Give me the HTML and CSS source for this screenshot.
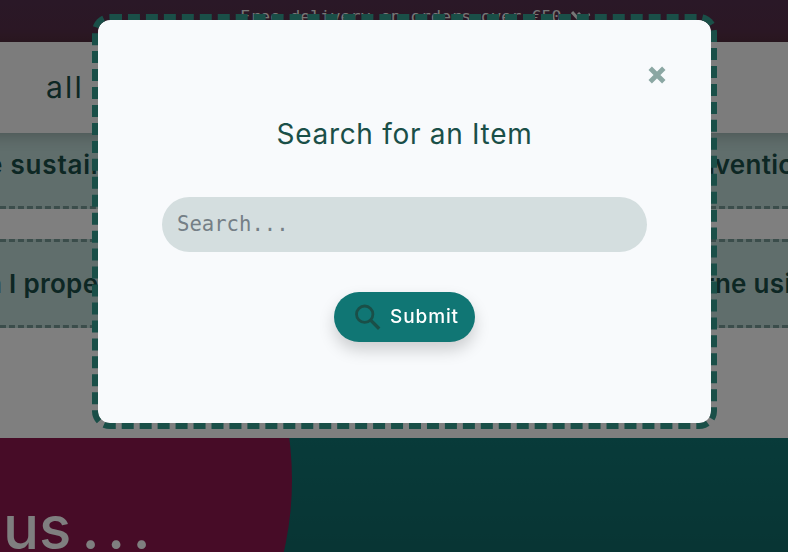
FILE: index.html
```html
<!DOCTYPE html>
<html lang="en">
<head>
<meta charset="utf-8">
<title>Search for an Item</title>
<link rel="stylesheet" href="styles.css">
</head>
<body>
<div class="page">
  <header class="banner">
    <span>Free delivery on orders over €50</span>
    <svg class="truck" width="20" height="14" viewBox="0 0 20 14"><path d="M1 1L11 12M7 2l4 4M17 3l1 2" fill="none" stroke="#eee" stroke-width="3"/></svg>
  </header>
  <nav class="nav"><a>all</a></nav>
  <main class="questions">
    <div class="bar bar-first"><span class="first-left">e sustain</span><span class="first-right">nventic</span></div>
    <div class="bar bar-second"><span class="second-left">n I prope</span><span class="second-right">rne usi</span></div>
  </main>
  <footer class="contact">
    <div class="disc"></div>
    <h2>us<span class="dots">...</span></h2>
  </footer>
</div>
<div class="overlay">
  <section class="modal">
    <button class="close" aria-label="Close"><svg width="18" height="18" viewBox="0 0 18 18"><path d="M2.2 2.2L15.8 15.8M15.8 2.2L2.2 15.8" stroke="#8ba7a3" stroke-width="4.8"/></svg></button>
    <h1>Search for an Item</h1>
    <input class="field" type="text" placeholder="Search...">
    <button class="submit"><svg width="26" height="26" viewBox="0 0 26 26"><circle cx="9.7" cy="10.2" r="8.2" fill="none" stroke="#1a4f48" stroke-width="2.8"/><path d="M15.6 16.1L24.2 24.7" stroke="#1a4f48" stroke-width="3.4"/></svg><span>Submit</span></button>
  </section>
</div>
</body>
</html>
```
FILE: styles.css
```css
* { box-sizing: border-box; }
body { margin: 0; overflow: hidden; font-family: Inter, "Liberation Sans", sans-serif; color: #1a4f48; }
.page { width: 788px; height: 552px; overflow: hidden; background: #fff; }
.banner { height: 42px; padding: 5px 0 0 240px; display: flex; align-items: flex-start; background: linear-gradient(#55304f, #562f49 75%, #573042); color: #eee; font: 16.7px/22px "DejaVu Sans Mono", monospace; white-space: pre; }
.truck { margin: 6px 0 0 9px; }
.nav { position: relative; z-index: 1; height: 91px; margin: 0 -30px; padding: 25px 0 0 76px; background: #f9f9f9; box-shadow: 0 3px 14px rgba(0, 0, 0, .22); font-size: 30px; line-height: 40px; letter-spacing: 2.2px; }
.questions { height: 305px; }
.bar { display: flex; justify-content: space-between; background: #c0dcd8; border: 0 dashed #779a96; font-size: 26px; font-weight: 600; line-height: 32px; letter-spacing: .3px; white-space: nowrap; }
.bar-first { height: 76px; padding-top: 16px; border-bottom-width: 3px; margin-bottom: 30px; }
.bar-second { height: 89px; padding-top: 26px; border-width: 3px 0; }
.first-left { margin-left: -13px; letter-spacing: .8px; }
.first-right { width: 89px; }
.second-left { margin-left: -14px; }
.second-right { width: 84px; }
.contact { position: relative; height: 114px; overflow: hidden; background: linear-gradient(#107674, #106a68); }
.disc { position: absolute; left: -348px; top: -278px; width: 640px; height: 640px; border-radius: 50%; background: #8e184e; }
h2 { position: relative; margin: 0; padding: 51px 0 0 3px; color: #fff; font-size: 60px; font-weight: 500; line-height: 76px; }
.dots { margin-left: 10px; letter-spacing: 7.3px; }
.overlay { position: fixed; inset: 0; z-index: 5; padding: 20px 0 0 98px; background: rgba(0, 0, 0, .5); }
.modal { width: 613px; height: 403px; border-radius: 12px; outline: 6px dashed #1a4f48; background: #f8fafc; display: flex; flex-direction: column; align-items: center; }
button { border: 0; padding: 0; }
.close { align-self: flex-end; margin: 46px 45px 0 0; width: 18px; height: 18px; background: none; }
.close svg { display: block; }
h1 { margin: 30px 0 0; height: 40px; font-size: 28px; font-weight: 400; line-height: 40px; letter-spacing: .7px; white-space: nowrap; }
.field { width: 485px; height: 55px; margin: 43px 0 0; padding: 0 15px 2px; border: 0; border-radius: 28px; background: #d4dedf; font: 20.6px "DejaVu Sans Mono", monospace; }
.field::placeholder { color: #757f86; opacity: 1; }
.submit { display: flex; align-items: center; width: 141px; height: 50px; margin-top: 40px; padding-left: 21px; gap: 9px; border-radius: 25px; background: #107674; box-shadow: 0 8px 16px rgba(0, 0, 0, .18); color: #fff; font: 500 19px/24px Inter, sans-serif; letter-spacing: .9px; }
```
